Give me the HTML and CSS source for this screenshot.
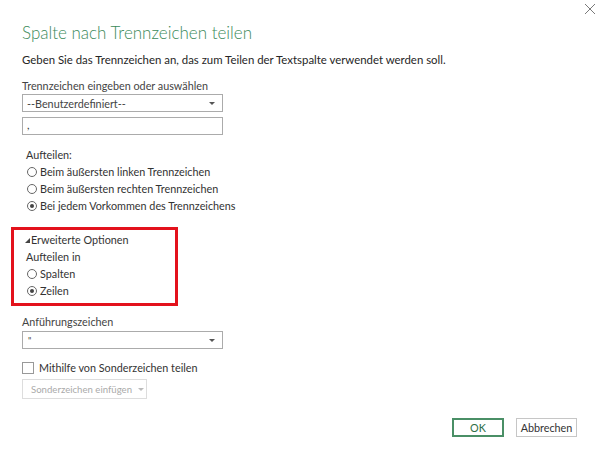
FILE: index.html
```html
<!DOCTYPE html>
<html lang="de">
<head>
    <meta charset="UTF-8">
    <title>Spalte nach Trennzeichen teilen</title>
    <link rel="stylesheet" href="styles.css">
</head>
<body>
    <div class="dialog">
        <!-- Close button in the corner -->
        <button class="close" aria-label="Schließen">
            <svg width="12" height="12" viewBox="0 0 12 12">
                <path d="M1 1 L11 11 M11 1 L1 11" stroke="#7a7a7a" stroke-width="1" fill="none"/>
            </svg>
        </button>

        <div class="title">Spalte nach Trennzeichen teilen</div>
        <div class="desc">Geben Sie das Trennzeichen an, das zum Teilen der Textspalte verwendet werden soll.</div>

        <!-- Delimiter -->
        <div class="label">Trennzeichen eingeben oder auswählen</div>
        <div class="select">
            <span>--Benutzerdefiniert--</span>
            <span class="arrow"></span>
        </div>
        <div class="textbox">,</div>

        <!-- Split mode -->
        <div class="group">
            <div class="row">Aufteilen:</div>
            <div class="row"><span class="radio"></span>Beim äußersten linken Trennzeichen</div>
            <div class="row"><span class="radio"></span>Beim äußersten rechten Trennzeichen</div>
            <div class="row"><span class="radio checked"></span>Bei jedem Vorkommen des Trennzeichens</div>
        </div>

        <!-- Advanced options, highlighted -->
        <div class="advanced">
            <div class="row toggle">
                <svg class="tri" width="5" height="5" viewBox="0 0 5 5"><polygon points="5,0 5,5 0,5" fill="#444"/></svg>
                Erweiterte Optionen
            </div>
            <div class="row">Aufteilen in</div>
            <div class="row"><span class="radio"></span>Spalten</div>
            <div class="row"><span class="radio checked"></span>Zeilen</div>
        </div>

        <!-- Quote char -->
        <div class="label quote-label">Anführungszeichen</div>
        <div class="select">
            <span class="quote">"</span>
            <span class="arrow"></span>
        </div>

        <div class="check-row"><span class="checkbox"></span>Mithilfe von Sonderzeichen teilen</div>
        <div class="special">Sonderzeichen einfügen <span class="arrow light"></span></div>

        <!-- Dialog buttons -->
        <div class="actions">
            <button class="btn ok">OK</button>
            <button class="btn">Abbrechen</button>
        </div>
    </div>
</body>
</html>
```

FILE: styles.css
```css
body {
    margin: 0;
    background: #fff;
    font-family: "Lato", "Open Sans", sans-serif;
    font-size: 11px;
    color: #333;
}

.dialog {
    position: relative;
    width: 600px;
    height: 459px;
    box-sizing: border-box;
    padding: 21px 0 0 22px;
    display: flex;
    flex-direction: column;
    align-items: flex-start;
}

.close {
    position: absolute;
    top: 3px;
    right: 4px;
    border: none;
    background: none;
    padding: 0;
    width: 12px;
    height: 12px;
}

.title {
    font-weight: 300;
    font-size: 17px;
    line-height: 24px;
    color: #3b8a5a;
}

.desc {
    margin-top: 6px;
    line-height: 17px;
    font-size: 11.4px;
    color: #262626;
}

.label {
    margin-top: 10px;
    line-height: 16px;
    font-size: 10.8px;
    color: #444;
}

/* dropdown look */
.select {
    width: 201px;
    height: 18px;
    box-sizing: border-box;
    border: 1px solid #ababab;
    display: flex;
    align-items: center;
    justify-content: space-between;
    padding: 0 7px 0 4px;
    font-size: 10.8px;
    color: #444;
}

.arrow {
    width: 0;
    height: 0;
    border-left: 3px solid transparent;
    border-right: 3px solid transparent;
    border-top: 3px solid #555;
}

.arrow.light {
    border-top-color: #bbb;
    margin-left: 6px;
}

.quote {
    font-size: 9px;
    padding-left: 1px;
}

.textbox {
    margin-top: 5px;
    width: 201px;
    height: 18px;
    box-sizing: border-box;
    border: 1px solid #ababab;
    padding: 0 4px;
    line-height: 14px;
    font-size: 11px;
}

.group {
    margin-top: 11px;
    padding-left: 4px;
}

.row {
    height: 17px;
    display: flex;
    align-items: center;
    font-size: 10.8px;
    color: #333;
}

.radio {
    width: 8px;
    height: 8px;
    border: 1px solid #666;
    border-radius: 50%;
    margin: 0 3px 0 1px;
    position: relative;
    flex-shrink: 0;
}

.radio.checked::after {
    content: "";
    position: absolute;
    left: 2px;
    top: 2px;
    width: 4px;
    height: 4px;
    border-radius: 50%;
    background: #444;
}

.advanced {
    margin: 13px 0 0 -11px;
    width: 167px;
    box-sizing: border-box;
    border: 3px solid #e3121c;
    padding: 1px 0 4px 12px;
}

.toggle .tri {
    margin: 1px 1px 0 -1px;
}

.quote-label {
    margin-top: 8px;
}

.quote-label + .select {
    margin-top: 1px;
}

.check-row {
    margin-top: 10px;
    height: 17px;
    display: flex;
    align-items: center;
    font-size: 10.8px;
}

.checkbox {
    width: 10px;
    height: 10px;
    border: 1px solid #999;
    margin-right: 5px;
}

.special {
    margin-top: 3px;
    height: 20px;
    width: 125px;
    box-sizing: border-box;
    border: 1px solid #ddd;
    display: flex;
    align-items: center;
    padding-left: 8px;
    white-space: nowrap;
    font-size: 9.6px;
    color: #aaa;
}

.actions {
    margin-top: 19px;
    align-self: flex-end;
    display: flex;
    gap: 12px;
    margin-right: 23px;
}

.btn {
    height: 19px;
    box-sizing: border-box;
    background: #fff;
    border: 1px solid #c6c6c6;
    font-family: inherit;
    font-size: 10.8px;
    color: #333;
    padding: 0;
    width: 61px;
}

.btn.ok {
    width: 52px;
    border: 2px solid #4a8f66;
    color: #2f6e47;
}
```
